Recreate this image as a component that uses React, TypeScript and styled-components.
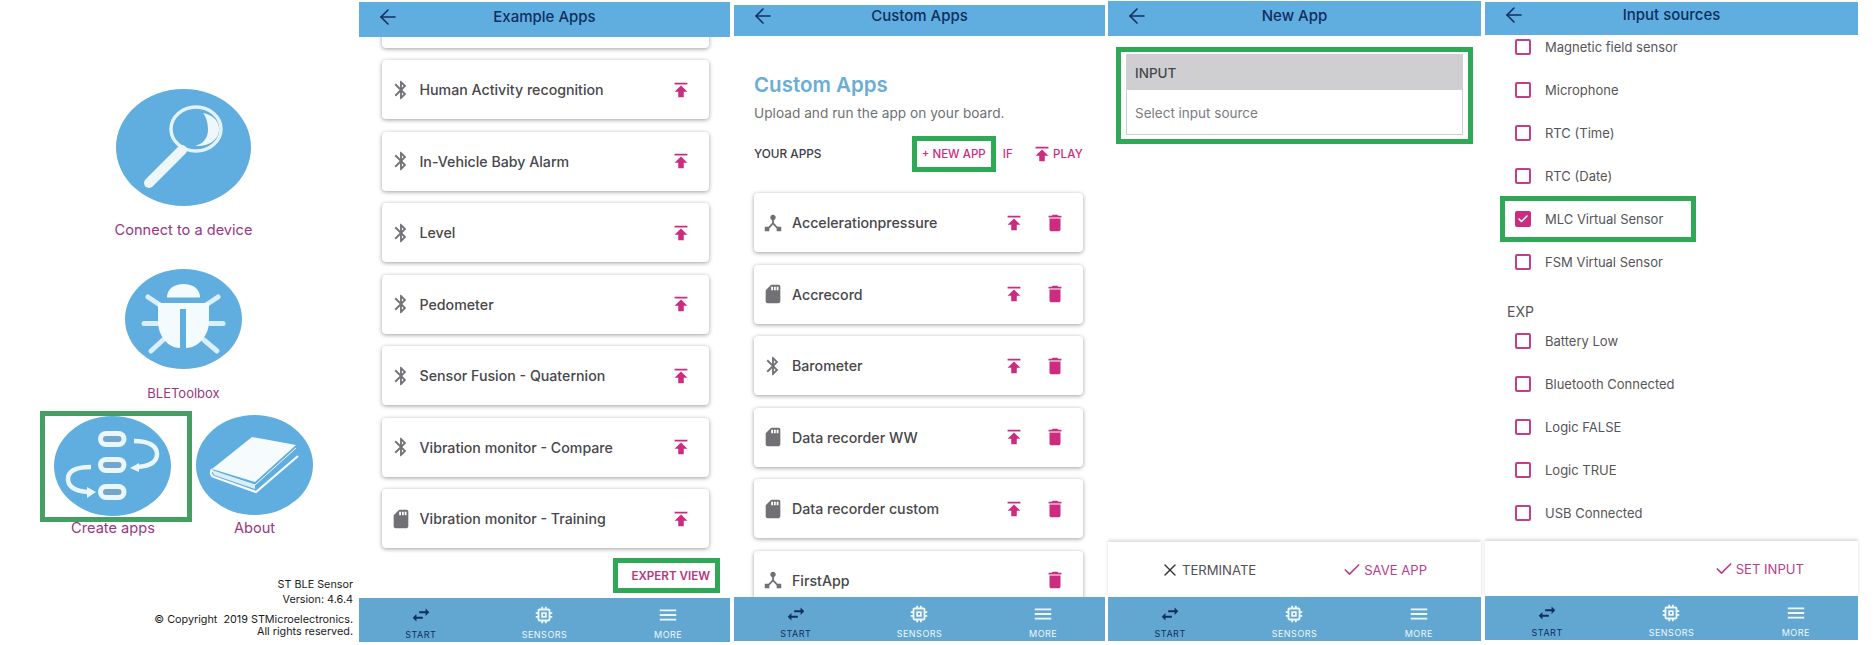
import React from 'react';
import styled, { createGlobalStyle } from 'styled-components';
import { ArrowLeft, Check, X } from 'lucide-react';
import {
  MdBluetooth,
  MdDelete,
  MdDeviceHub,
  MdMemory,
  MdMenu,
  MdPublish,
  MdSdCard,
  MdSwapHoriz,
} from 'react-icons/md';

const BLUE = '#60addf';
const NAV_BLUE = '#62a7d1';
const NAVY = '#0f2f5f';
const PINK = '#cb2c7f';
const GREEN = '#2fa955';

const GlobalStyle = createGlobalStyle`
  html, body {
    margin: 0;
    background: #fff;
    font-family: Inter, "Noto Sans", sans-serif;
  }
`;

const Page = styled.div`
  display: flex;
  align-items: flex-start;
  width: 1874px;
  height: 645px;
  overflow: hidden;
`;

const Screen = styled.section<{ $width: number; $left?: number; $top: number; $height: number }>`
  display: flex;
  flex-direction: column;
  flex: none;
  width: ${p => p.$width}px;
  height: ${p => p.$height}px;
  margin-left: ${p => p.$left || 0}px;
  margin-top: ${p => p.$top}px;
`;

const Header = styled.header<{ $height: number; $pad: number }>`
  display: grid;
  grid-template-columns: 1fr auto 1fr;
  flex: none;
  height: ${p => p.$height}px;
  padding-top: ${p => p.$pad}px;
  box-sizing: border-box;
  background: ${BLUE};
  color: ${NAVY};

  svg {
    display: block;
    margin: -2px 0 0 17px;
  }
`;

const HeaderTitle = styled.div`
  font-size: 15px;
  line-height: 20px;
  font-weight: 500;
`;

const Main = styled.div`
  flex: 1;
  min-height: 0;
  overflow: hidden;
`;

const NavBar = styled.nav`
  display: grid;
  grid-template-columns: repeat(3, 1fr);
  flex: none;
  height: 44px;
  background: ${NAV_BLUE};
`;

const NavItem = styled.div<{ $active?: boolean }>`
  display: flex;
  flex-direction: column;
  align-items: center;
  padding-top: 6px;
  color: ${p => (p.$active ? NAVY : '#eef7fc')};

  span {
    margin-top: 4px;
    font-size: 9px;
    line-height: 10px;
    letter-spacing: 0.5px;
  }
`;

// home screen
const Home = styled.div`
  display: flex;
  flex-direction: column;
  height: 100%;
`;

const HomeTile = styled.div`
  display: flex;
  flex-direction: column;
  align-items: center;
  padding-left: 8px;
`;

const TileRow = styled.div`
  display: flex;
  align-items: flex-start;
  gap: 4px;
  margin: 9px 0 0 40px;
`;

const TileColumn = styled.div`
  display: flex;
  flex-direction: column;
  align-items: center;
`;

const TileFrame = styled.div`
  display: flex;
  box-sizing: border-box;
  width: 152px;
  height: 111px;
  padding: 0 16px 0 9px;
  border: 5px solid #459f63;
`;

const TileLabel = styled.div<{ $size?: number; $gap: number; $shift?: number }>`
  margin-top: ${p => p.$gap}px;
  margin-right: ${p => p.$shift || 0}px;
  font-size: ${p => p.$size || 14.6}px;
  line-height: 18px;
  color: #97387f;
`;

const Art = styled.svg<{ $top?: number }>`
  display: block;
  flex: none;
  margin-top: ${p => p.$top || 0}px;
`;

const About = styled.div`
  margin: auto 6px 7px 0;
  text-align: right;
  font-size: 10.8px;
  color: #1b1b1b;
`;

const AboutLine = styled.div<{ $line: number; $gap?: number }>`
  line-height: ${p => p.$line}px;
  margin-top: ${p => p.$gap || 0}px;
  white-space: pre;
`;

// card lists
const CardList = styled.div<{ $top?: number }>`
  display: flex;
  flex-direction: column;
  gap: 12.5px;
  margin-top: ${p => p.$top || 0}px;
`;

const AppList = styled(Main)<{ $pad: string }>`
  padding: ${p => p.$pad};
`;

const Card = styled.div`
  display: flex;
  align-items: center;
  flex: none;
  gap: 8px;
  height: 59px;
  box-sizing: border-box;
  padding: 0 17px 0 8px;
  background: #fff;
  border-radius: 4px;
  box-shadow: 0 1px 4px rgba(0, 0, 0, 0.38);
  color: #707075;
`;

const CardName = styled.div`
  flex: 1;
  font-size: 14.2px;
  font-weight: 500;
  color: #47474c;
`;

const CardActions = styled.div`
  display: flex;
  gap: 19px;
  color: ${PINK};

  svg {
    display: block;
  }
`;

const Frame = styled.div<{ $width?: number }>`
  box-sizing: border-box;
  width: ${p => (p.$width ? `${p.$width}px` : 'auto')};
  border: 5px solid ${GREEN};
`;

const ExpertRow = styled.div`
  display: flex;
  justify-content: flex-end;
  flex: none;
  height: 40px;
  padding-right: 10px;
`;

const ExpertFrame = styled(Frame)`
  display: flex;
  align-items: center;
  justify-content: flex-end;
  height: 35px;
  padding-right: 5px;
  font-size: 11.6px;
  font-weight: 600;
  color: #b5387f;
`;

// custom apps
const Title = styled.h1`
  margin: 35px 0 0;
  font-size: 20.5px;
  line-height: 28px;
  font-weight: 600;
  color: #6aaed6;
`;

const Subtitle = styled.p`
  margin: 4px 0 0;
  font-size: 13.7px;
  line-height: 20px;
  color: #6f6f74;
`;

const ActionBar = styled.div`
  display: flex;
  align-items: center;
  height: 36px;
  margin: 13px 0 21px;
  font-size: 11.5px;
  font-weight: 500;
`;

const ActionTitle = styled.div`
  flex: 1;
  font-size: 11.8px;
  color: #3c3c41;
`;

const ActionLink = styled.div<{ $left?: number }>`
  display: flex;
  align-items: center;
  margin-left: ${p => p.$left || 0}px;
  color: ${PINK};
  letter-spacing: 0.2px;
`;

const NewAppFrame = styled(Frame)`
  display: flex;
  align-items: center;
  justify-content: center;
  height: 36px;
  color: ${PINK};
  font-size: 11.5px;
  font-weight: 500;
`;

// new app
const InputFrame = styled(Frame)`
  margin: 11px 8px 0;
  padding: 2px 5px;
  height: 97px;
`;

const InputCard = styled.div`
  box-sizing: border-box;
  height: 81px;
  border: 1px solid #cfcfd2;
`;

const InputHead = styled.div`
  display: flex;
  align-items: center;
  height: 35px;
  padding-left: 8px;
  background: #cfcfd2;
  font-size: 13.5px;
  font-weight: 500;
  color: #47474c;
`;

const InputHint = styled.div`
  padding: 13px 0 0 8px;
  font-size: 13.5px;
  line-height: 20px;
  color: #7c7c80;
`;

const ActionFooter = styled.div<{ $end?: boolean }>`
  display: flex;
  align-items: center;
  justify-content: ${p => (p.$end ? 'flex-end' : 'flex-start')};
  flex: none;
  gap: 86px;
  height: 55px;
  padding: 0 ${p => (p.$end ? 54 : 0)}px 0 ${p => (p.$end ? 0 : 52)}px;
  background: #fff;
  box-shadow: 0 -2px 3px rgba(0, 0, 0, 0.15);
  position: relative;
`;

const FooterAction = styled.div<{ $primary?: boolean }>`
  display: flex;
  align-items: center;
  gap: 2px;
  font-size: 13.1px;
  color: ${p => (p.$primary ? '#b8408a' : '#505055')};

  svg {
    color: ${p => (p.$primary ? '#b8408a' : '#333')};
  }
`;

// input sources
const SourceList = styled.div`
  margin-top: -10px;
`;

const SourceRow = styled.label<{ $framed?: boolean }>`
  display: flex;
  align-items: center;
  gap: 14px;
  position: relative;
  height: 43.1px;
  padding-left: 30px;
  font-size: 13px;
  color: #55555a;

  ${p =>
    p.$framed &&
    `
    &::after {
      content: '';
      position: absolute;
      left: 15px;
      top: -1.5px;
      width: 196px;
      height: 46px;
      box-sizing: border-box;
      border: 5px solid ${GREEN};
    }
  `}
`;

const CheckBox = styled.span<{ $checked?: boolean }>`
  display: flex;
  align-items: center;
  justify-content: center;
  flex: none;
  width: 16px;
  height: 16px;
  box-sizing: border-box;
  border: 2px solid ${p => (p.$checked ? PINK : '#c33f85')};
  border-radius: 2px;
  background: ${p => (p.$checked ? PINK : '#fff')};
  color: #fff;
`;

const SourceGroup = styled.div`
  padding: 18px 0 0 22px;
  margin-bottom: -2px;
  font-size: 14px;
  line-height: 20px;
  color: #55555a;
`;

const BottomNav = () => (
  <NavBar>
    <NavItem $active>
      <MdSwapHoriz size={22} />
      <span>START</span>
    </NavItem>
    <NavItem>
      <MdMemory size={22} />
      <span>SENSORS</span>
    </NavItem>
    <NavItem>
      <MdMenu size={22} />
      <span>MORE</span>
    </NavItem>
  </NavBar>
);

const TopBar = ({ title, height, pad }: { title: string; height: number; pad: number }) => (
  <Header $height={height} $pad={pad}>
    <div>
      <ArrowLeft size={24} strokeWidth={1.6} />
    </div>
    <HeaderTitle>{title}</HeaderTitle>
  </Header>
);

const SearchArt = () => (
  <Art width={135} height={117} viewBox="0 0 135 117" $top={89}>
    <ellipse cx={67.5} cy={58.5} rx={67.5} ry={58.5} fill={BLUE} />
    <ellipse cx={80} cy={40} rx={25} ry={22} fill="none" stroke="#e2f3fb" strokeWidth={3.5} />
    <path d="M66 61 L33 94" stroke="#eef8fc" strokeWidth={10} strokeLinecap="round" />
    <path d="M87 24 C98 26 104 33 103 42 C102 52 91 58 79 57 C87 55 92 49 92 41 C92 33 90 28 87 24 Z" fill="#eef8fc" />
  </Art>
);

const BugArt = () => (
  <Art width={117} height={100} viewBox="0 0 117 100" $top={30}>
    <ellipse cx={58.5} cy={50} rx={58.5} ry={50} fill={BLUE} />
    <g stroke="#d9eff9" strokeWidth={5} strokeLinecap="round">
      <path d="M23 28 L38 38 M93 28 L78 38 M19 54.5 H32 M98 54.5 H85 M26 82 L38 71 M92 82 L79 71" />
    </g>
    <path d="M42 28.5 C42 20 49 15 58.5 15 C68 15 75 20 75 28.5 Z" fill="#f4fbfe" />
    <path d="M33 34 H84 V52 C84 68 72 79 61 79 V40 H55 V79 C44 79 33 68 33 52 Z" fill="#f4fbfe" />
  </Art>
);

const Pill = ({ cy }: { cy: number }) => (
  <g>
    <rect x={44} y={cy - 8} width={28.5} height={16} rx={8} fill="#e9f6fb" />
    <rect x={49} y={cy - 3} width={18.5} height={6} rx={3} fill="#74a6cc" />
  </g>
);

const FlowArt = () => (
  <Art width={117} height={100} viewBox="0 0 117 100">
    <ellipse cx={58.5} cy={50} rx={58.5} ry={50} fill={BLUE} />
    <Pill cy={23} />
    <Pill cy={49} />
    <Pill cy={76} />
    <g fill="none" stroke="#e9f6fb" strokeWidth={4.5}>
      <path d="M80 25 C95 25 103 30 103 38 C103 46 96 50 84 51" />
      <path d="M37 51 C22 51 14 55 14 63 C14 71 22 75 33 76" />
    </g>
    <path d="M76 52 L85 47 V56 Z M42 76 L33 71 V82 Z" fill="#e9f6fb" />
  </Art>
);

const BookArt = () => (
  <Art width={117} height={100} viewBox="0 0 117 100" $top={4}>
    <ellipse cx={58.5} cy={50} rx={58.5} ry={50} fill={BLUE} />
    <path d="M56 22 L100 30 L59 67 L16 54 Z" fill="#f6fbfe" />
    <path d="M100 33 L59 70 L16 56" fill="none" stroke="#f6fbfe" strokeWidth={1} />
    <path d="M16 54 C14 58 15 61 18 62 L60 77 L102 41" fill="none" stroke="#f6fbfe" strokeWidth={2.2} />
    <path d="M16 55 L59 70 V74 L18 60 Z" fill="#d9eff9" />
  </Art>
);

const exampleApps: [string, 'ble' | 'sd'][] = [
  ['', 'ble'],
  ['Human Activity recognition', 'ble'],
  ['In-Vehicle Baby Alarm', 'ble'],
  ['Level', 'ble'],
  ['Pedometer', 'ble'],
  ['Sensor Fusion - Quaternion', 'ble'],
  ['Vibration monitor - Compare', 'ble'],
  ['Vibration monitor - Training', 'sd'],
];

const customApps: [string, 'hub' | 'sd' | 'ble', boolean][] = [
  ['Accelerationpressure', 'hub', true],
  ['Accrecord', 'sd', true],
  ['Barometer', 'ble', true],
  ['Data recorder WW', 'sd', true],
  ['Data recorder custom', 'sd', true],
  ['FirstApp', 'hub', false],
];

const sourcesTop = ['Magnetic field sensor', 'Microphone', 'RTC (Time)', 'RTC (Date)', 'MLC Virtual Sensor', 'FSM Virtual Sensor'];
const sourcesExp = ['Battery Low', 'Bluetooth Connected', 'Logic FALSE', 'Logic TRUE', 'USB Connected'];

const KindIcon = ({ kind }: { kind: 'hub' | 'sd' | 'ble' }) => {
  if (kind === 'hub') return <MdDeviceHub size={22} />;
  if (kind === 'sd') return <MdSdCard size={22} />;
  return <MdBluetooth size={22} />;
};

const App = () => (
  <Page>
    <GlobalStyle />

    <Screen $width={359} $top={0} $height={645}>
      <Home>
        <HomeTile>
          <SearchArt />
          <TileLabel $gap={15}>Connect to a device</TileLabel>
        </HomeTile>
        <HomeTile>
          <BugArt />
          <TileLabel $size={13} $gap={15}>BLEToolbox</TileLabel>
        </HomeTile>
        <TileRow>
          <TileColumn>
            <TileFrame>
              <FlowArt />
            </TileFrame>
            <TileLabel $gap={-3} $shift={6}>Create apps</TileLabel>
          </TileColumn>
          <TileColumn>
            <BookArt />
            <TileLabel $gap={4}>About</TileLabel>
          </TileColumn>
        </TileRow>
        <About>
          <AboutLine $line={15}>ST BLE Sensor</AboutLine>
          <AboutLine $line={15}>Version: 4.6.4</AboutLine>
          <AboutLine $line={12} $gap={7}>© Copyright  2019 STMicroelectronics.</AboutLine>
          <AboutLine $line={12}>All rights reserved.</AboutLine>
        </About>
      </Home>
    </Screen>

    <Screen $width={371} $top={2} $height={640}>
      <TopBar title="Example Apps" height={35} pad={5} />
      <AppList $pad="0 21px 0 22.5px">
        <CardList $top={-48.5}>
          {exampleApps.map(([name, kind], i) => (
            <Card key={i}>
              <KindIcon kind={kind} />
              <CardName>{name}</CardName>
              <CardActions>
                <MdPublish size={22} />
              </CardActions>
            </Card>
          ))}
        </CardList>
      </AppList>
      <ExpertRow>
        <ExpertFrame $width={107}>EXPERT VIEW</ExpertFrame>
      </ExpertRow>
      <BottomNav />
    </Screen>

    <Screen $width={371} $left={4} $top={5} $height={636}>
      <TopBar title="Custom Apps" height={31} pad={1} />
      <AppList $pad="0 22px 0 20px">
        <Title>Custom Apps</Title>
        <Subtitle>Upload and run the app on your board.</Subtitle>
        <ActionBar>
          <ActionTitle>YOUR APPS</ActionTitle>
          <NewAppFrame $width={84}>+ NEW APP</NewAppFrame>
          <ActionLink $left={7}>IF</ActionLink>
          <ActionLink $left={18}>
            <MdPublish size={22} />
            PLAY
          </ActionLink>
        </ActionBar>
        <CardList>
          {customApps.map(([name, kind, upload]) => (
            <Card key={name}>
              <KindIcon kind={kind} />
              <CardName>{name}</CardName>
              <CardActions>
                {upload && <MdPublish size={22} />}
                <MdDelete size={22} />
              </CardActions>
            </Card>
          ))}
        </CardList>
      </AppList>
      <BottomNav />
    </Screen>

    <Screen $width={373} $left={3} $top={1} $height={640}>
      <TopBar title="New App" height={35} pad={5} />
      <Main>
        <InputFrame>
          <InputCard>
            <InputHead>INPUT</InputHead>
            <InputHint>Select input source</InputHint>
          </InputCard>
        </InputFrame>
      </Main>
      <ActionFooter>
        <FooterAction>
          <X size={20} strokeWidth={1.6} />
          TERMINATE
        </FooterAction>
        <FooterAction $primary>
          <Check size={20} strokeWidth={2} />
          SAVE APP
        </FooterAction>
      </ActionFooter>
      <BottomNav />
    </Screen>

    <Screen $width={373} $left={4} $top={2} $height={638}>
      <TopBar title="Input sources" height={33} pad={3} />
      <Main>
        <SourceList>
          {sourcesTop.map(name => {
            const checked = name === 'MLC Virtual Sensor';
            return (
              <SourceRow key={name} $framed={checked}>
                <CheckBox $checked={checked}>{checked && <Check size={12} strokeWidth={3} />}</CheckBox>
                {name}
              </SourceRow>
            );
          })}
          <SourceGroup>EXP</SourceGroup>
          {sourcesExp.map(name => (
            <SourceRow key={name}>
              <CheckBox />
              {name}
            </SourceRow>
          ))}
        </SourceList>
      </Main>
      <ActionFooter $end>
        <FooterAction $primary>
          <Check size={20} strokeWidth={2} />
          SET INPUT
        </FooterAction>
      </ActionFooter>
      <BottomNav />
    </Screen>
  </Page>
);

export default App;
